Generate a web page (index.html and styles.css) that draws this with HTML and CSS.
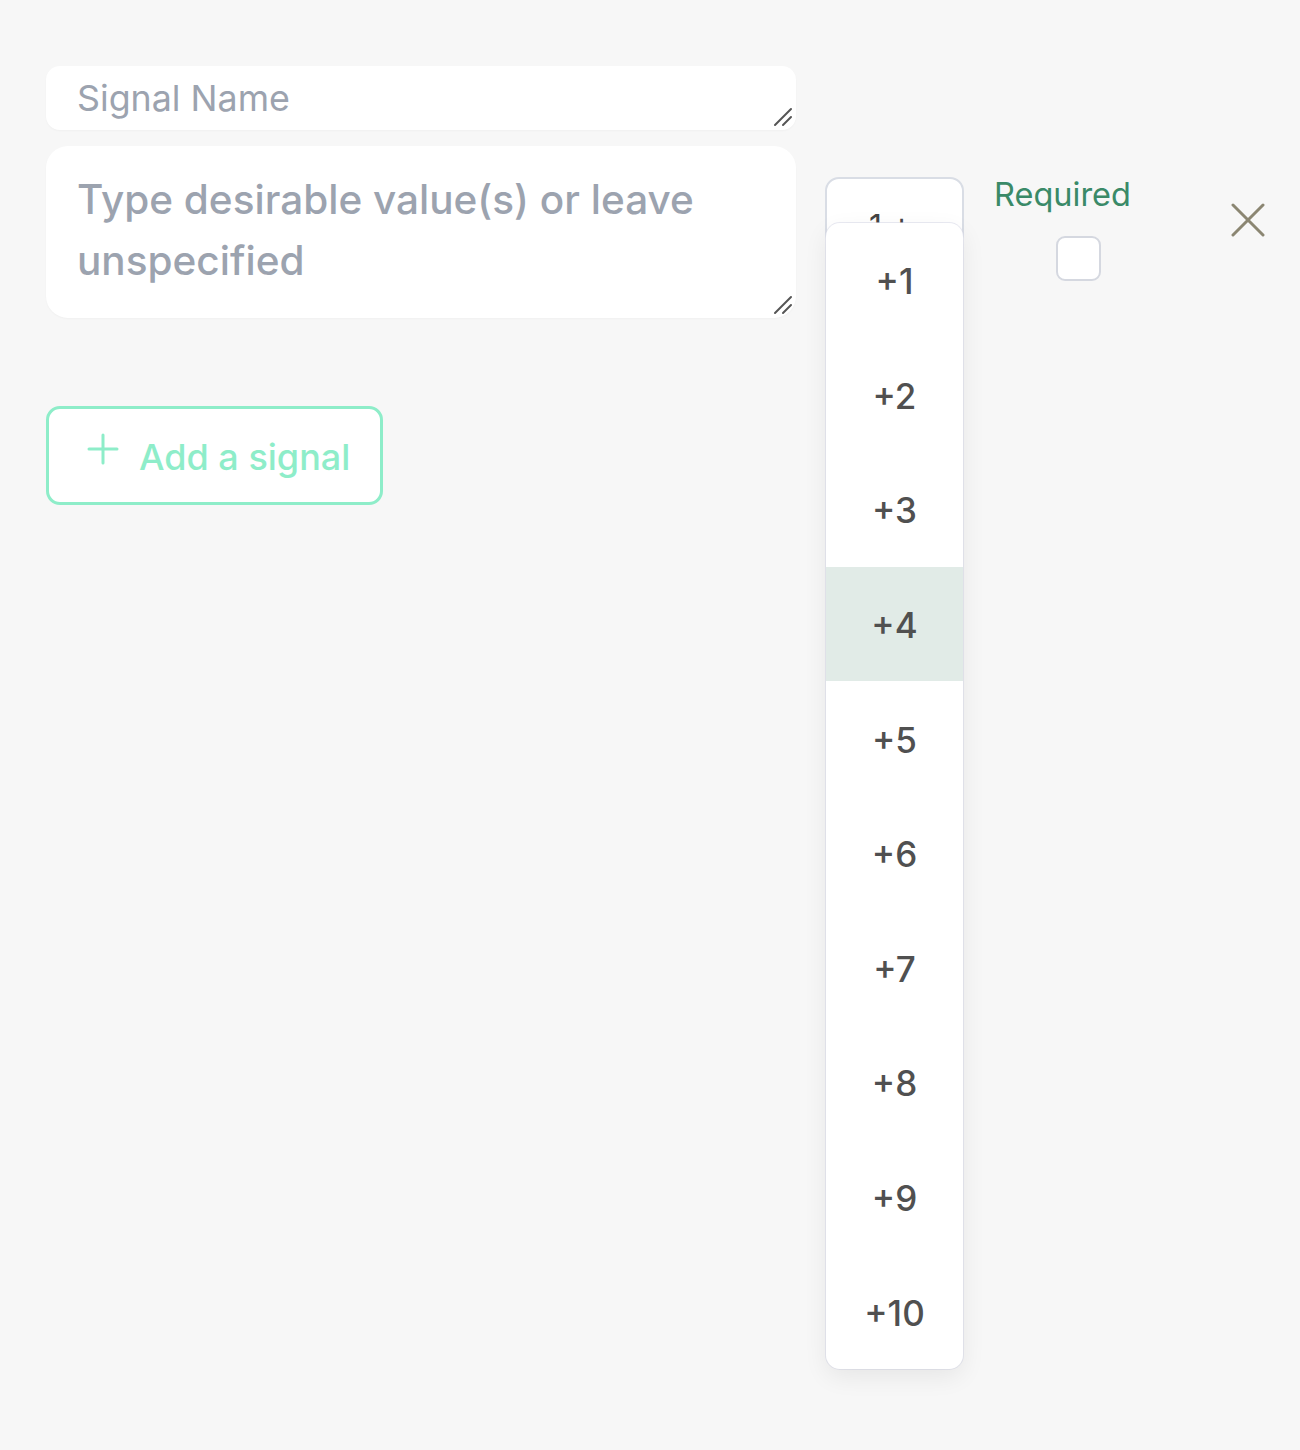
FILE: index.html
```html
<!DOCTYPE html>
<html>
<head>
<meta charset="utf-8">
<link rel="stylesheet" href="styles.css">
</head>
<body>
<div class="page">
  <div class="left">
    <div class="field field-name">
      <span class="placeholder name-ph">Signal Name</span>
      <svg class="grip" width="22" height="22" viewBox="0 0 22 22"><path d="M3 19 L19 3 M11 19 L19 11" stroke="#555" stroke-width="2" stroke-linecap="round" fill="none"/></svg>
    </div>
    <div class="field field-value">
      <span class="placeholder value-ph">Type desirable value(s) or leave unspecified</span>
      <svg class="grip" width="22" height="22" viewBox="0 0 22 22"><path d="M3 19 L19 3 M11 19 L19 11" stroke="#555" stroke-width="2" stroke-linecap="round" fill="none"/></svg>
    </div>
    <button class="add-btn">
      <svg class="plus" width="32" height="32" viewBox="0 0 32 32"><path d="M16 2 V30 M2 16 H30" stroke="#8eedc9" stroke-width="3" stroke-linecap="round"/></svg>
      <span>Add a signal</span>
    </button>
  </div>
  <div class="right">
    <div class="select-wrap">
      <div class="select">1 +</div>
      <ul class="menu">
        <li>+1</li>
        <li>+2</li>
        <li>+3</li>
        <li class="active">+4</li>
        <li>+5</li>
        <li>+6</li>
        <li>+7</li>
        <li>+8</li>
        <li>+9</li>
        <li>+10</li>
      </ul>
    </div>
    <div class="required">
      <span class="req-label">Required</span>
      <span class="checkbox"></span>
    </div>
    <svg class="close" width="34" height="34" viewBox="0 0 34 34"><path d="M2 2 L32 32 M32 2 L2 32" stroke="#8b8672" stroke-width="3" stroke-linecap="round"/></svg>
  </div>
</div>
</body>
</html>
```

FILE: styles.css
```css
* { box-sizing: border-box; }
html, body { margin: 0; padding: 0; }
body {
  background: #f7f7f7;
  font-family: Inter, "Noto Sans", sans-serif;
  width: 1300px;
  height: 1450px;
  overflow: hidden;
}
.page {
  display: flex;
  padding: 66px 0 0 46px;
}
.left {
  width: 750px;
  display: flex;
  flex-direction: column;
  align-items: flex-start;
}
.field {
  position: relative;
  width: 750px;
  background: #fff;
  border-radius: 14px;
  box-shadow: 0 1px 2px rgba(0,0,0,0.03);
}
.field-name {
  height: 64px;
  padding: 11px 31px 0;
}
.field-value {
  margin-top: 16px;
  height: 172px;
  padding: 23px 31px 0;
  border-radius: 22px;
}
.placeholder {
  color: #9ca3af;
  display: block;
}
.name-ph {
  font-size: 35.8px;
  line-height: 42px;
}
.value-ph {
  font-size: 40.5px;
  line-height: 61px;
  font-weight: 500;
  width: 680px;
}
.grip {
  position: absolute;
  right: 2px;
  bottom: 2px;
}
.add-btn {
  margin-top: 88px;
  width: 337px;
  height: 99px;
  background: #fff;
  border: 3px solid #8eedc9;
  border-radius: 14px;
  display: flex;
  align-items: center;
  padding: 0 0 0 38px;
  gap: 20px;
  color: #8eedc9;
  font-family: Inter, "Noto Sans", sans-serif;
  font-size: 36px;
  font-weight: 500;
  cursor: pointer;
}
.add-btn span { margin-top: 3px; }
.add-btn .plus { margin-top: -14px; }
.right {
  display: flex;
  align-items: flex-start;
  margin-top: 111px;
  margin-left: 29px;
}
.select-wrap {
  position: relative;
  width: 139px;
}
.select {
  height: 70px;
  border: 2px solid #d9dde5;
  border-radius: 14px;
  background: #fff;
  font-size: 32px;
  color: #444;
  padding: 28px 0 0 42px;
  overflow: hidden;
}
.menu {
  position: absolute;
  top: 46px;
  left: 1px;
  width: 137px;
  margin: 0;
  padding: 0;
  list-style: none;
  background: #fff;
  border-radius: 14px;
  box-shadow: 0 8px 24px rgba(0,0,0,0.07), 0 0 0 1px rgba(220,222,235,0.6);
  overflow: hidden;
}
.menu li {
  height: 114.6px;
  display: flex;
  align-items: center;
  justify-content: center;
  font-size: 35px;
  font-weight: 500;
  color: #505050;
  padding-top: 2px;
}
.menu li.active {
  background: #e1ebe7;
}
.required {
  margin-left: 30px;
  display: flex;
  flex-direction: column;
  align-items: flex-start;
}
.req-label {
  font-size: 32.5px;
  color: #3a8a68;
  line-height: 36px;
}
.checkbox {
  margin-top: 23px;
  margin-left: 62px;
  width: 45px;
  height: 45px;
  border: 2px solid #d5d8e0;
  border-radius: 9px;
  background: #fff;
}
.close {
  margin-left: 100px;
  margin-top: 26px;
}
```
